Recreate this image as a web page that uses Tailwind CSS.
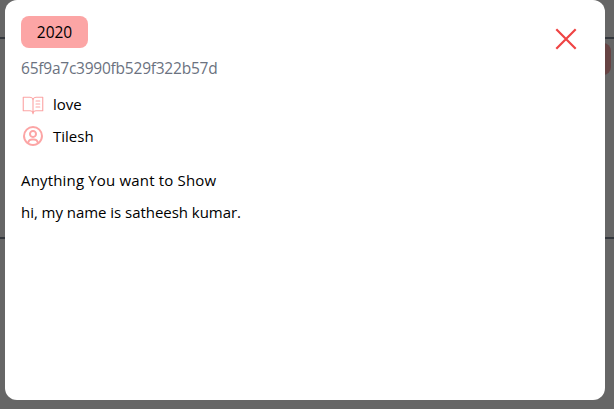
<!DOCTYPE html>
<html lang="en">
<head>
<meta charset="utf-8">
<title>Book details</title>
<script src="https://cdn.jsdelivr.net/npm/@tailwindcss/browser@4"></script>
</head>
<body class="relative h-[409px] overflow-hidden bg-[#666666] font-['Open_Sans','Noto_Sans',sans-serif] text-[15px]/6 text-black">
  <div class="flex h-full flex-col">
    <div class="h-[37px]"></div>
    <div class="flex h-[202px] items-start justify-end border-y-2 border-[#33373d] pt-1 pr-[3px]">
      <div class="h-8 w-16 rounded-lg bg-[#664343]"></div>
    </div>
  </div>
  <main class="absolute top-0 left-[5px] flex h-[400px] w-[600px] flex-col rounded-xl bg-white p-4">
    <svg class="absolute top-6 right-6 size-[30px] text-[#ef4444]" viewBox="0 0 30 30" fill="none" stroke="currentColor" stroke-width="2.2"><path d="M5.3 5.3 24.7 24.7M24.7 5.3 5.3 24.7"/></svg>
    <h2 class="flex h-8 w-[67px] items-center justify-center rounded-lg bg-[#fca5a5] text-[15.5px]">2020</h2>
    <h4 class="my-2 text-[15.5px] tracking-[-0.23px] text-[#6b7280]">65f9a7c3990fb529f322b57d</h4>
    <div class="flex h-8 items-center gap-x-2">
      <svg class="size-6 text-[#fca5a5]" viewBox="0 0 256 256" fill="currentColor"><path d="M232,50H160a38,38,0,0,0-32,17.55A38,38,0,0,0,96,50H24A6,6,0,0,0,18,56V200a6,6,0,0,0,6,6H96a26,26,0,0,1,26,26,6,6,0,0,0,12,0,26,26,0,0,1,26-26h72a6,6,0,0,0,6-6V56A6,6,0,0,0,232,50ZM96,194H30V62H96a26,26,0,0,1,26,26V204.31A37.86,37.86,0,0,0,96,194Zm130,0H160a37.87,37.87,0,0,0-26,10.32V88a26,26,0,0,1,26-26h66ZM160,90h40a6,6,0,0,1,0,12H160a6,6,0,0,1,0-12Zm46,38a6,6,0,0,1-6,6H160a6,6,0,0,1,0-12h40A6,6,0,0,1,206,128Zm0,32a6,6,0,0,1-6,6H160a6,6,0,0,1,0-12h40A6,6,0,0,1,206,160Z"/></svg>
      <span>love</span>
    </div>
    <div class="flex h-8 items-center gap-x-2">
      <svg class="size-6 text-[#fca5a5]" viewBox="0 0 24 24" fill="currentColor"><path d="M12 2A10.13 10.13 0 0 0 2 12a10 10 0 0 0 4 7.92V20h.1a9.7 9.7 0 0 0 11.8 0h.1v-.08A10 10 0 0 0 22 12 10.13 10.13 0 0 0 12 2zM8.07 18.93A3 3 0 0 1 11 16.57h2a3 3 0 0 1 2.93 2.36 7.75 7.75 0 0 1-7.86 0zm9.54-1.29A5 5 0 0 0 13 14.57h-2a5 5 0 0 0-4.61 3.07A8 8 0 0 1 4 12a8.1 8.1 0 0 1 8-8 8.1 8.1 0 0 1 8 8 8 8 0 0 1-2.39 5.64z"/><path d="M12 6a3.91 3.91 0 0 0-4 4 3.91 3.91 0 0 0 4 4 3.91 3.91 0 0 0 4-4 3.91 3.91 0 0 0-4-4zm0 6a1.91 1.91 0 0 1-2-2 1.91 1.91 0 0 1 2-2 1.91 1.91 0 0 1 2 2 1.91 1.91 0 0 1-2 2z"/></svg>
      <span>Tilesh</span>
    </div>
    <p class="mt-4 tracking-[0.17px]">Anything You want to Show</p>
    <p class="my-2 tracking-[-0.04px]">hi, my name is satheesh kumar.</p>
  </main>
</body>
</html>
